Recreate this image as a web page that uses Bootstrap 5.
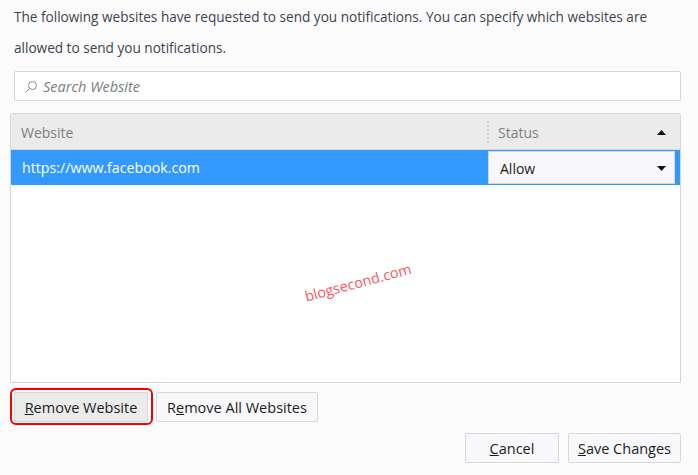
<!DOCTYPE html>
<html lang="en">
<head>
<meta charset="utf-8">
<title>Notification Settings</title>
<link href="https://cdn.jsdelivr.net/npm/bootstrap@5.3.0/dist/css/bootstrap.min.css" rel="stylesheet">
<style>
html,body{width:698px;height:475px;overflow:hidden;}
body{background:#fbfbfb;font-family:"Open Sans","Noto Sans",sans-serif;font-size:14px;color:#3c4450;padding:1px 17px 0 10px;position:relative;}
.intro{margin:0 0 8px 4px;line-height:31px;font-size:13.6px;width:660px;}
.searchbox{margin-left:4px;height:30px;background:#fff;border:1px solid #d7d7db;border-radius:2px;padding:1px 8px 0 9px;color:#7c7c7c;font-style:italic;font-size:14.5px;gap:5px;margin-bottom:12px;}
.sitebox{height:270px;background:#fff;border:1px solid #d7d7db;border-radius:2px 2px 0 0;margin-bottom:5px;}
.headrow{height:36px;background:#ebebeb;color:#808080;border-bottom:1px solid #d7d7db;}
.headrow .colsite{width:476px;padding:2px 0 0 10px;}
.headrow .colstatus{flex:1;border-left:2px dotted #cfcfcf;height:22px;padding:2px 14px 0 9px;}
.siterow{height:35px;background:#3399ff;color:#fff;padding:1px 5px 1px 0;font-size:14.2px;}
.siterow .colsite{width:477px;padding:1px 0 0 11px;}
.statusdrop{flex:1;background:#f8f8fb;border:1px solid #d7d7db;color:#1a1a1a;padding:1px 8px 0 11px;font-size:14px;}
.btnrow{gap:8px;padding:4px 0 0 4px;}
.fxbtn{height:30px;padding:2px 0 0;background:#f8f8fb;border:1px solid #d7d7db;border-radius:2px;color:#1c1c1c;font-size:14.5px;line-height:1;}
.fxbtn:hover{background:#f8f8fb;border-color:#d7d7db;}
.w-remove{width:134px;background:#ebebeb;}
.w-removeall{width:162px;}
.w-cancel{width:94px;}
.w-save{width:113px;}
.endrow{gap:9px;margin-top:11px;}
.ring{position:absolute;left:10px;top:388px;width:143px;height:37px;border:2px solid #f50000;border-radius:6px;pointer-events:none;}
.wmark{position:absolute;left:305px;top:288px;color:#f9565f;font-size:14.4px;font-weight:500;transform:rotate(-15deg);transform-origin:0 50%;white-space:nowrap;line-height:1.2;}
</style>
</head>
<body>
<p class="intro">The following websites have requested to send you notifications. You can specify which websites are allowed to send you notifications.</p>
<div class="searchbox d-flex align-items-center">
<svg width="14" height="14" viewBox="0 0 14 14" fill="none" stroke="#8a8a8a" aria-hidden="true"><circle cx="8.500" cy="5.500" r="4"/><path d="M5.500 8.500 1.500 12.500"/></svg>
<span>Search Website</span>
</div>
<div class="sitebox">
<div class="headrow d-flex align-items-center">
<div class="colsite">Website</div>
<div class="colstatus d-flex align-items-center justify-content-between"><span>Status</span>
<svg width="9" height="5" viewBox="0 0 9 5" aria-hidden="true"><path d="M4.500 0 9 5H0z" fill="#111"/></svg></div>
</div>
<div class="siterow d-flex align-items-center">
<div class="colsite">https://www.facebook.com</div>
<div class="statusdrop h-100 d-flex align-items-center justify-content-between"><span>Allow</span>
<svg width="9" height="5" viewBox="0 0 9 5" aria-hidden="true"><path d="M0 0H9L4.500 5z" fill="#111"/></svg></div>
</div>
</div>
<div class="btnrow d-flex">
<button type="button" class="btn fxbtn w-remove"><u>R</u>emove Website</button>
<button type="button" class="btn fxbtn w-removeall">R<u>e</u>move All Websites</button>
</div>
<div class="endrow d-flex justify-content-end">
<button type="button" class="btn fxbtn w-cancel"><u>C</u>ancel</button>
<button type="button" class="btn fxbtn w-save"><u>S</u>ave Changes</button>
</div>
<div class="ring"></div>
<div class="wmark">blogsecond.com</div>
<script src="https://cdn.jsdelivr.net/npm/bootstrap@5.3.0/dist/js/bootstrap.bundle.min.js"></script>
</body>
</html>
